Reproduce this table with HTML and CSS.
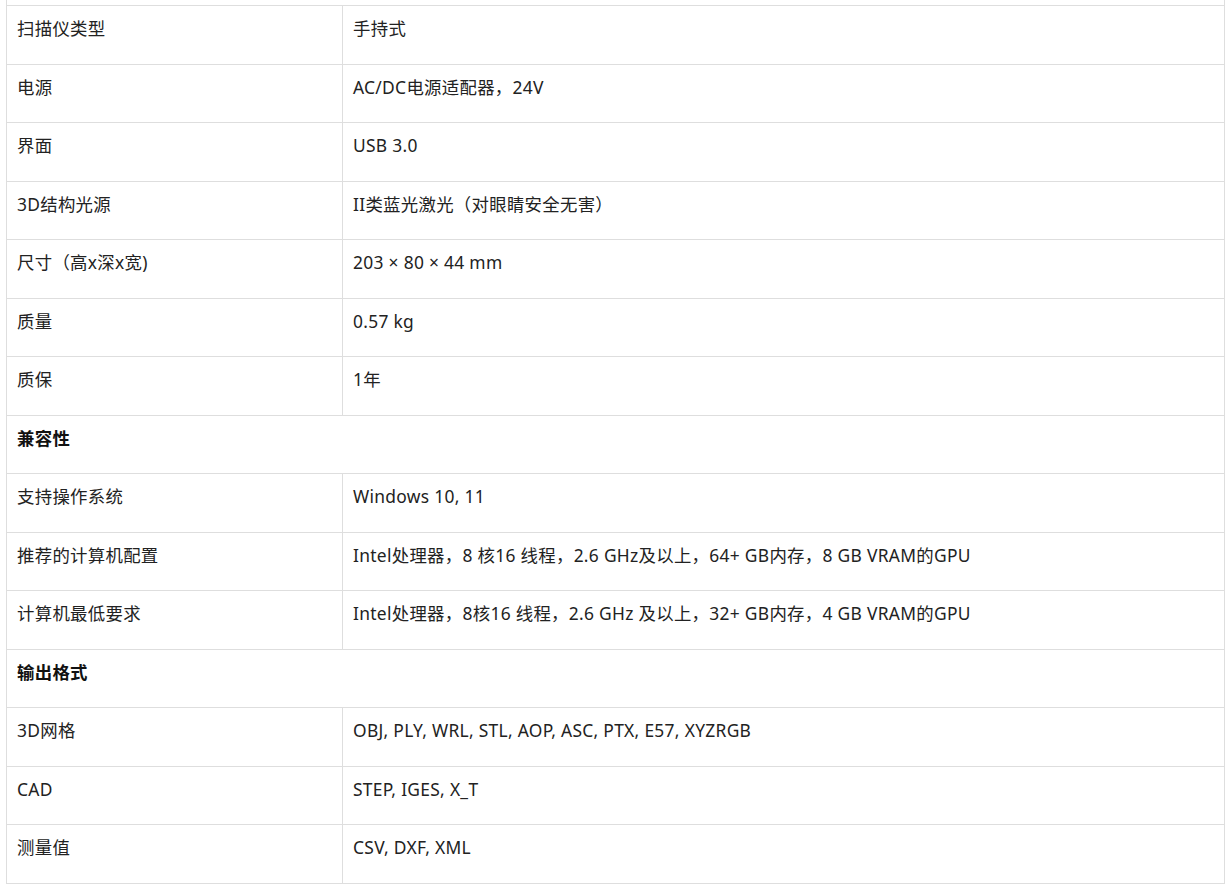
FILE: index.html
```html
<!DOCTYPE html>
<html lang="zh-CN">
<head>
<meta charset="utf-8">
<title>规格</title>
<link rel="stylesheet" href="styles.css">
</head>
<body>
<table class="spec">
  <colgroup><col class="c-label"><col class="c-value"></colgroup>
  <tbody>
    <tr class="cut"><td colspan="2"></td></tr>
    <tr><td>扫描仪类型</td><td>手持式</td></tr>
    <tr><td>电源</td><td>AC/DC电源适配器，24V</td></tr>
    <tr><td>界面</td><td>USB 3.0</td></tr>
    <tr><td>3D结构光源</td><td>II类蓝光激光（对眼睛安全无害）</td></tr>
    <tr><td>尺寸（高x深x宽)</td><td>203 × 80 × 44 mm</td></tr>
    <tr><td>质量</td><td>0.57 kg</td></tr>
    <tr><td>质保</td><td>1年</td></tr>
    <tr class="section"><td colspan="2">兼容性</td></tr>
    <tr><td>支持操作系统</td><td>Windows 10, 11</td></tr>
    <tr><td>推荐的计算机配置</td><td>Intel处理器，8 核16 线程，2.6 GHz及以上，64+ GB内存，8 GB VRAM的GPU</td></tr>
    <tr><td>计算机最低要求</td><td>Intel处理器，8核16 线程，2.6 GHz 及以上，32+ GB内存，4 GB VRAM的GPU</td></tr>
    <tr class="section"><td colspan="2">输出格式</td></tr>
    <tr><td>3D网格</td><td>OBJ, PLY, WRL, STL, AOP, ASC, PTX, E57, XYZRGB</td></tr>
    <tr><td>CAD</td><td>STEP, IGES, X_T</td></tr>
    <tr><td>测量值</td><td>CSV, DXF, XML</td></tr>
  </tbody>
</table>
</body>
</html>
```
FILE: styles.css
```css
html, body {
  margin: 0;
  padding: 0;
  background: #fff;
}
body {
  font-family: "Noto Sans", "Noto Sans CJK SC", sans-serif;
  font-size: 17.4px;
  letter-spacing: 0.3px;
  color: #222;
}
.spec {
  border-collapse: collapse;
  margin: 0 0 0 6px;
  width: 1219px;
  table-layout: fixed;
}
.c-label { width: 336px; }
.spec td {
  border: 1px solid #dedede;
  padding: 10px 10px 23.5px 10px;
  line-height: 24px;
  vertical-align: top;
  text-align: left;
}
.spec .cut td {
  padding: 0;
  height: 5px;
  line-height: 0;
  border-top: none;
}
.spec .section td {
  font-weight: 700;
  color: #111;
}
```
